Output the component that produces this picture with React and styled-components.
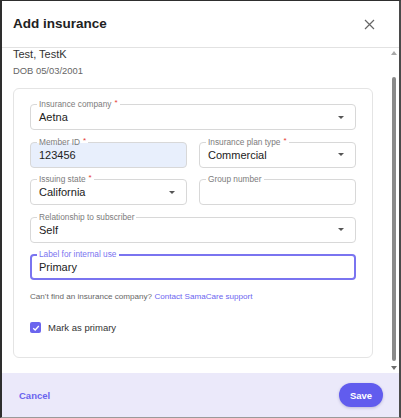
import React from 'react'
import styled, { createGlobalStyle } from 'styled-components'

const GlobalStyle = createGlobalStyle`
  html, body {
    margin: 0;
    padding: 0;
    background: #fff;
  }
  body {
    font-family: "Liberation Sans", Arial, sans-serif;
    color: #222;
  }
  * {
    box-sizing: border-box;
  }
`

const Dialog = styled.div`
  width: 401px;
  height: 418px;
  display: flex;
  flex-direction: column;
  background: #fff;
  border-top: 1px solid #2e2e2e;
  border-left: 2px solid #2e2e2e;
  border-right: 2px solid #4a4a4a;
  border-bottom: 1px solid #9a9a9a;
  overflow: hidden;
`

const Header = styled.div`
  height: 47px;
  flex-shrink: 0;
  display: flex;
  align-items: center;
  justify-content: space-between;
  padding-left: 11px;
  border-bottom: 1px solid #e2e2e2;
`

const Title = styled.h2`
  margin: 0 0 1px;
  font-size: 13.5px;
  font-weight: 700;
  color: #222;
`

const CloseButton = styled.button`
  width: 24px;
  height: 24px;
  margin-right: 18px;
  padding: 0;
  border: none;
  background: none;
  display: flex;
  align-items: center;
  justify-content: center;
  cursor: pointer;
`

const Body = styled.div`
  flex: 1;
  display: flex;
  min-height: 0;
`

const Content = styled.div`
  flex: 1;
  overflow: hidden;
  padding: 0 15px 0 11px;
`

const Name = styled.div`
  font-size: 11px;
  line-height: 12px;
  color: #333;
`

const Dob = styled.div`
  margin-top: 4px;
  font-size: 9.4px;
  line-height: 14px;
  color: #666;
`

const Card = styled.div`
  margin-top: 10px;
  border: 1px solid #e4e4e4;
  border-radius: 6px;
  padding: 15px 16px 23px;
`

const FormGrid = styled.div`
  display: grid;
  grid-template-columns: 1fr 1fr;
  column-gap: 12px;
  row-gap: 11.5px;
`

const FieldBox = styled.div`
  position: relative;
  grid-column: ${(p) => (p.$full ? '1 / -1' : 'auto')};
  height: 26px;
  display: flex;
  align-items: center;
  border: ${(p) => (p.$focused ? '2px solid #7a74f0' : '1px solid #d8d8d8')};
  border-radius: 4px;
  background: ${(p) => p.$bg};
  padding: ${(p) => (p.$focused ? '0 10px 0 7px' : '0 11px 0 8px')};
`

const FieldLabel = styled.span`
  position: absolute;
  top: ${(p) => (p.$focused ? '-7px' : '-6px')};
  left: ${(p) => (p.$focused ? '5px' : '6px')};
  padding: 0 2px;
  font-size: 8.3px;
  line-height: 10px;
  white-space: nowrap;
  color: ${(p) => (p.$focused ? '#7a74f0' : '#7c7c7c')};
  background: linear-gradient(to bottom, #fff 50%, ${(p) => p.$bg} 50%);
`

const Required = styled.span`
  position: relative;
  top: -2px;
  margin-left: 3px;
  color: #e53935;
  font-size: 8px;
`

const Value = styled.span`
  flex: 1;
  font-size: 11px;
  color: #222;
`

const Caret = styled.span`
  width: 0;
  height: 0;
  border-left: 3px solid transparent;
  border-right: 3px solid transparent;
  border-top: 3px solid #555;
`

const HelperText = styled.p`
  margin: 11px 0 0;
  font-size: 8.1px;
  line-height: 12px;
  color: #666;
`

const Link = styled.a`
  color: #6c65f0;
  text-decoration: none;
`

const CheckRow = styled.label`
  margin-top: 18.5px;
  display: flex;
  align-items: center;
  gap: 7px;
  height: 12px;
  font-size: 9.5px;
  color: #333;
`

const CheckBox = styled.span`
  width: 11px;
  height: 11px;
  border-radius: 2px;
  background: #6b65ee;
  display: flex;
  align-items: center;
  justify-content: center;
`

const ScrollTrack = styled.div`
  width: 11px;
  flex-shrink: 0;
  display: flex;
  flex-direction: column;
  align-items: center;
  padding: 3px 0 3px 1px;
`

const Arrow = styled.span`
  width: 0;
  height: 0;
  border-left: 3px solid transparent;
  border-right: 3px solid transparent;
  ${(p) =>
    p.$down
      ? `border-top: 4px solid #6e6e6e; margin-top: 5px;`
      : `border-bottom: 4px solid #a8a8a8; margin-bottom: 22px;`}
`

const Thumb = styled.span`
  flex: 1;
  width: 4.5px;
  border-radius: 3px;
  background: #8a8a8a;
`

const Footer = styled.div`
  height: 44px;
  flex-shrink: 0;
  display: flex;
  align-items: center;
  justify-content: space-between;
  padding: 0 16px 0 17px;
  background: #ebe9fa;
`

const CancelButton = styled.button`
  border: none;
  background: none;
  padding: 0;
  font-family: inherit;
  font-size: 9.5px;
  font-weight: 700;
  color: #6a64ee;
  cursor: pointer;
`

const SaveButton = styled.button`
  width: 44px;
  height: 24px;
  border: none;
  border-radius: 12px;
  background: #615cee;
  color: #fff;
  font-family: inherit;
  font-size: 9.5px;
  font-weight: 700;
  box-shadow: 0 1px 3px rgba(40, 30, 120, 0.25);
  cursor: pointer;
`

function Field({ label, value, required, select, full, autofill, focused }) {
  const bg = autofill ? '#e8effc' : '#fff'
  return (
    <FieldBox $full={full} $focused={focused} $bg={bg}>
      <FieldLabel $focused={focused} $bg={bg}>
        {label}
        {required && <Required>*</Required>}
      </FieldLabel>
      <Value>{value}</Value>
      {select && <Caret />}
    </FieldBox>
  )
}

export default function App() {
  return (
    <>
      <GlobalStyle />
      <Dialog>
        <Header>
          <Title>Add insurance</Title>
          <CloseButton aria-label="Close">
            <svg width="11" height="11" viewBox="0 0 11 11">
              <path d="M1 1 L10 10 M10 1 L1 10" stroke="#666" strokeWidth="1.2" />
            </svg>
          </CloseButton>
        </Header>
        <Body>
          <Content>
            <Name>Test, TestK</Name>
            <Dob>DOB 05/03/2001</Dob>
            <Card>
              <FormGrid>
                <Field full label="Insurance company" required value="Aetna" select />
                <Field label="Member ID" required value="123456" autofill />
                <Field label="Insurance plan type" required value="Commercial" select />
                <Field label="Issuing state" required value="California" select />
                <Field label="Group number" value="" />
                <Field full label="Relationship to subscriber" value="Self" select />
                <Field full focused label="Label for internal use" value="Primary" />
              </FormGrid>
              <HelperText>
                Can't find an insurance company? <Link href="#">Contact SamaCare support</Link>
              </HelperText>
              <CheckRow>
                <CheckBox>
                  <svg width="8" height="8" viewBox="0 0 8 8">
                    <path d="M1.2 4.2 L3.2 6 L6.8 2" fill="none" stroke="#fff" strokeWidth="1.3" />
                  </svg>
                </CheckBox>
                Mark as primary
              </CheckRow>
            </Card>
          </Content>
          <ScrollTrack>
            <Arrow />
            <Thumb />
            <Arrow $down />
          </ScrollTrack>
        </Body>
        <Footer>
          <CancelButton>Cancel</CancelButton>
          <SaveButton>Save</SaveButton>
        </Footer>
      </Dialog>
    </>
  )
}
